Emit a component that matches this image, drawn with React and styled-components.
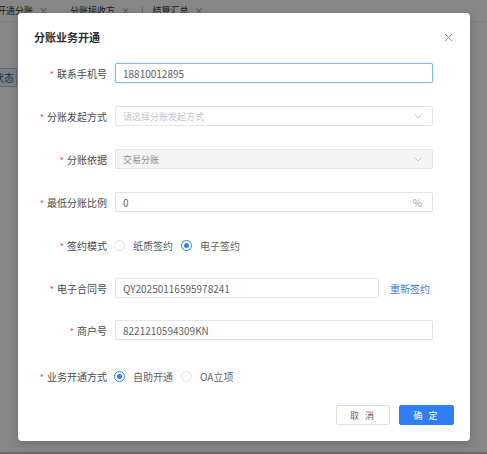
import styled, { createGlobalStyle } from 'styled-components'

const GlobalStyle = createGlobalStyle`
    html, body {
        margin: 0;
        padding: 0;
    }
    body {
        font-family: "Noto Sans CJK SC", "Noto Sans", sans-serif;
        -webkit-font-smoothing: antialiased;
    }
`

const colors = {
    primary: '#2f7ff0',
    label: '#4a4a4a',
    text: '#5f6266',
    placeholder: '#c0c4cc',
    border: '#dcdfe6',
    required: '#f04d4d',
}

const Page = styled.div`
    position: relative;
    width: 487px;
    height: 454px;
    overflow: hidden;
    display: flex;
    background: #c8c8c8;
`

const Main = styled.div`
    flex: 1;
    background: #fff;
    margin-bottom: 2px;
    display: flex;
    flex-direction: column;
`

const TabBar = styled.div`
    display: flex;
    align-items: center;
    height: 21px;
    margin-left: -3px;
    font-size: 9px;
    color: #333;
    border-bottom: 1px solid #eee;
`

const Tab = styled.span`
    display: flex;
    align-items: center;
    gap: 6px;
    margin-right: ${props => props.gap}px;
    white-space: nowrap;

    i {
        font-style: normal;
        color: #888;
        font-size: 9px;
    }
`

const Divider = styled.span`
    color: #999;
    margin-right: 9px;
`

const Toolbar = styled.div`
    display: flex;
    margin-top: 46px;
    margin-left: -4px;
`

const FilterButton = styled.div`
    width: 21px;
    height: 19px;
    box-sizing: border-box;
    border: 1px solid #a9c8f0;
    background: #e9f1fc;
    color: #2b5da8;
    font-size: 10px;
    line-height: 17px;
    overflow: hidden;
    white-space: nowrap;
    text-indent: -3px;
`

const Overlay = styled.div`
    position: absolute;
    inset: 0;
    background: rgba(0, 0, 0, 0.47);
    padding: 13px 0 0 18px;
`

const Dialog = styled.div`
    width: 452px;
    background: #fff;
    border-radius: 4px;
    box-shadow: 0 3px 10px rgba(0, 0, 0, 0.2);
`

const Header = styled.div`
    display: flex;
    align-items: center;
    justify-content: space-between;
    padding: 16px 17px 0 16px;
    height: 16px;
`

const Title = styled.h3`
    margin: 0;
    font-size: 11px;
    font-weight: 700;
    color: #2b2b2b;
`

const Close = styled.span`
    display: flex;
    color: #999;
`

const Body = styled.div`
    padding: 18px 0 0 0;
`

const Row = styled.div`
    display: flex;
    align-items: center;
    height: 20px;
    margin-top: ${props => props.top ?? 23}px;
`

const Label = styled.label`
    width: 97px;
    box-sizing: border-box;
    padding-right: 8px;
    text-align: right;
    font-size: 10px;
    color: ${colors.label};
    white-space: nowrap;

    &::before {
        content: '*';
        color: ${colors.required};
        margin-right: 3px;
        font-size: 9px;
    }
`

const Field = styled.div`
    width: ${props => props.width || 318}px;
    height: 20px;
    box-sizing: border-box;
    display: flex;
    align-items: center;
    justify-content: space-between;
    padding: 0 10px 0 7px;
    border: 1px solid ${props => (props.focused ? '#86b4ee' : props.disabled ? '#e6e6e6' : '#e3e5ea')};
    border-radius: 2px;
    background: ${props => (props.disabled ? '#f4f4f4' : '#fff')};
    box-shadow: ${props => (props.focused ? '0 0 0 1px rgba(64,150,255,0.12)' : 'none')};
    font-size: ${props => (props.small ? 9 : 10)}px;
    color: ${props => (props.placeholder ? '#c4c7cc' : props.disabled ? '#8e8e8e' : colors.text)};
`

const Suffix = styled.span`
    color: #999;
    font-size: 10px;
`

const Chevron = () => (
    <svg width="8" height="5" viewBox="0 0 8 5">
        <polyline points="0.5,0.5 4,4 7.5,0.5" fill="none" stroke="#c8cbd0" strokeWidth="1" />
    </svg>
)

const LinkText = styled.a`
    margin-left: 11px;
    font-size: 10px;
    color: #3a7fdc;
    text-decoration: none;
`

const RadioGroup = styled.div`
    display: flex;
    align-items: center;
    margin-left: -1px;
`

const RadioItem = styled.span`
    display: flex;
    align-items: center;
    gap: 8px;
    margin-right: 8px;
    font-size: 10px;
    color: ${colors.text};
`

const Circle = styled.span`
    width: 11px;
    height: 11px;
    box-sizing: border-box;
    border-radius: 50%;
    border: 1px solid ${props => (props.checked ? colors.primary : '#e2e4e8')};
    display: flex;
    align-items: center;
    justify-content: center;

    &::after {
        content: '';
        width: 5px;
        height: 5px;
        border-radius: 50%;
        background: ${props => (props.checked ? colors.primary : 'transparent')};
    }
`

const Footer = styled.div`
    display: flex;
    justify-content: flex-end;
    gap: 9px;
    padding: 19px 16px 16px 0;
`

const Button = styled.button`
    width: ${props => props.width}px;
    height: 20px;
    border-radius: 2px;
    font-family: inherit;
    font-size: 9px;
    letter-spacing: 2px;
    padding: 0;
    cursor: pointer;
    border: 1px solid ${props => (props.primary ? colors.primary : colors.border)};
    background: ${props => (props.primary ? colors.primary : '#fff')};
    color: ${props => (props.primary ? '#fff' : '#666')};
`

const Radio = ({ checked, children }) => (
    <RadioItem>
        <Circle checked={checked} />
        {children}
    </RadioItem>
)

export default function App() {
    return (
        <Page>
            <GlobalStyle />
            <Main>
                <TabBar>
                    <Tab gap={22}>开通分账<i>×</i></Tab>
                    <Tab gap={11}>分账接收方<i>×</i></Tab>
                    <Divider>|</Divider>
                    <Tab gap={0}>结算汇总<i>×</i></Tab>
                </TabBar>
                <Toolbar>
                    <FilterButton>状态</FilterButton>
                </Toolbar>
            </Main>

            <Overlay>
                <Dialog>
                    <Header>
                        <Title>分账业务开通</Title>
                        <Close>
                            <svg width="9" height="9" viewBox="0 0 9 9">
                                <path d="M1 1L8 8M8 1L1 8" stroke="#9a9a9a" strokeWidth="1" />
                            </svg>
                        </Close>
                    </Header>

                    <Body>
                        <Row top={0}>
                            <Label>联系手机号</Label>
                            <Field focused>18810012895</Field>
                        </Row>
                        <Row>
                            <Label>分账发起方式</Label>
                            <Field placeholder small>
                                请选择分账发起方式
                                <Chevron />
                            </Field>
                        </Row>
                        <Row>
                            <Label>分账依据</Label>
                            <Field disabled small>
                                交易分账
                                <Chevron />
                            </Field>
                        </Row>
                        <Row>
                            <Label>最低分账比例</Label>
                            <Field>
                                0
                                <Suffix>%</Suffix>
                            </Field>
                        </Row>
                        <Row>
                            <Label>签约模式</Label>
                            <RadioGroup>
                                <Radio>纸质签约</Radio>
                                <Radio checked>电子签约</Radio>
                            </RadioGroup>
                        </Row>
                        <Row>
                            <Label>电子合同号</Label>
                            <Field width={264}>QY20250116595978241</Field>
                            <LinkText>重新签约</LinkText>
                        </Row>
                        <Row top={22}>
                            <Label>商户号</Label>
                            <Field>8221210594309KN</Field>
                        </Row>
                        <Row top={26}>
                            <Label>业务开通方式</Label>
                            <RadioGroup>
                                <Radio checked>自助开通</Radio>
                                <Radio>OA立项</Radio>
                            </RadioGroup>
                        </Row>
                    </Body>

                    <Footer>
                        <Button width={54}>取 消</Button>
                        <Button width={55} primary>确 定</Button>
                    </Footer>
                </Dialog>
            </Overlay>
        </Page>
    )
}
